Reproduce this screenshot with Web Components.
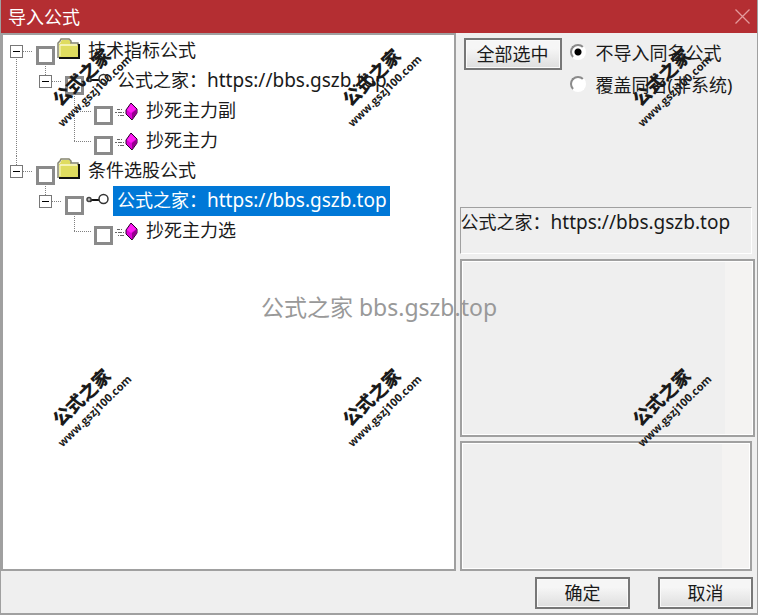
<!DOCTYPE html>
<html lang="zh-CN">
<head>
<meta charset="utf-8">
<title>导入公式</title>
<style>
  html, body {
    margin: 0;
    height: 100%;
  }

  body {
    font: 18px/30px "Noto Sans", "Noto Sans CJK SC", sans-serif;
    color: #1a1a1a;
    background: #efefef;
  }

  .url {
    font-size: 19px;
  }
</style>
</head>
<body>
<import-dialog>
  <formula-tree slot="tree">
    <tree-item icon="folder" open first>技术指标公式
      <tree-item slot="children" icon="key" open last>公式之家：<span class="url">https://bbs.gszb.top</span>
        <tree-item slot="children" icon="formula">抄死主力副</tree-item>
        <tree-item slot="children" icon="formula" last>抄死主力</tree-item>
      </tree-item>
    </tree-item>
    <tree-item icon="folder" open last>条件选股公式
      <tree-item slot="children" icon="key" open last selected>公式之家：<span class="url">https://bbs.gszb.top</span>
        <tree-item slot="children" icon="formula" last>抄死主力选</tree-item>
      </tree-item>
    </tree-item>
  </formula-tree>
  <import-options slot="options"></import-options>
  <info-box slot="details">公式之家：<span class="url">https://bbs.gszb.top</span></info-box>
  <text-pane slot="details" class="wide" label="公式说明"></text-pane>
  <text-pane slot="details" class="short" label="公式内容"></text-pane>
  <push-button slot="actions">确定</push-button>
  <push-button slot="actions">取消</push-button>
</import-dialog>

<script>
const define = (tag, html, setup) => {
  const template = document.createElement("template");
  template.innerHTML = html;

  customElements.define(tag, class extends HTMLElement {
    constructor() {
      super();
      this.dom = this.attachShadow({ mode: "open" });
      this.dom.appendChild(template.content.cloneNode(true));
    }

    connectedCallback() {
      if (setup && !this.ready) setup(this, this.dom);
      this.ready = true;
    }
  });
};

const icons = {
  folder: `
    <svg width="24" height="30" viewBox="0 0 24 30">
      <path d="M2 22V8l2-2V5l1-1h7l2 2v2h7v14z" fill="#dfdc5f"/>
      <path d="M1 22V7l2-2 1-2h8l2 2v2h7v2" fill="none" stroke="#85856f" stroke-width="1.5"/>
      <path d="M3 9h17" stroke="#fbfad0" stroke-width="1.5"/>
      <path d="M3 9v11" stroke="#fbfad0"/>
      <path d="M2 22h20V8" fill="none" stroke="#111" stroke-width="2"/>
    </svg>`,
  key: `
    <svg width="24" height="30" viewBox="0 0 24 30">
      <path d="M5 14h9" stroke="#111" stroke-width="2"/>
      <circle cx="3" cy="13.5" r="2" fill="#bbb" stroke="#444" stroke-width="1.5"/>
      <path d="M4 16l3-2" stroke="#222"/>
      <circle cx="17.5" cy="13" r="4.5" fill="#fff" stroke="#333" stroke-width="1.5"/>
    </svg>`,
  formula: `
    <svg width="24" height="30" viewBox="0 0 24 30">
      <g stroke="#666" stroke-width="1">
        <path d="M2 13.5h6" stroke-dasharray="3 1 1 1"/>
        <path d="M0 16.5h9" stroke-dasharray="2 1 4 1"/>
        <path d="M3 19.5h7" stroke-dasharray="1 1 4 1"/>
      </g>
      <path d="M16 7l6 6v4l-5 7-6-6v-4z" fill="#e000d8" stroke="#2b002b"/>
      <path d="M16 8l-4 6 4 3 5-4z" fill="#ff20f4"/>
      <path d="M17 23v-6l5-4v4z" fill="#96008f"/>
    </svg>`
};

define("push-button", `
  <style>
    :host {
      display: inline-block;
      min-width: 95px;
    }

    button {
      display: block;
      box-sizing: border-box;
      width: 100%;
      height: 32px;
      padding: 0 8px;
      font: inherit;
      line-height: 26px;
      color: inherit;
      border: 2px solid #777;
      border-radius: 0;
      background: linear-gradient(#f6f6f6 30%, #dedede);
      box-shadow: inset 0 0 0 1px #fafafa;
    }
  </style>
  <button type="button"><slot></slot></button>
`);

define("tree-item", `
  <style>
    /* trunk of the tree: full height, or to the middle of the row for the last item */
    :host {
      display: block;
      color: #1a1a1a;
      background: repeating-linear-gradient(#808080 0 1px, transparent 1px 2px) 6px 0 / 1px 100% no-repeat;
    }

    :host([first]) {
      background-position: 6px 15px;
    }

    :host([last]) {
      background-size: 1px 15px;
    }

    .row, label {
      display: flex;
      height: 30px;
    }

    .lead {
      display: flex;
      align-items: center;
      width: 25px;
    }

    .lead::after {
      content: "";
      flex: 1;
      height: 1px;
      margin-right: 2px;
      background: repeating-linear-gradient(90deg, #808080 0 1px, transparent 1px 2px);
    }

    :host(:not([open])) .lead {
      padding-left: 6px;
      box-sizing: border-box;
    }

    .toggle {
      display: grid;
      place-items: center;
      box-sizing: border-box;
      width: 13px;
      height: 13px;
      padding: 0;
      border: 1px solid #777;
      border-radius: 0;
      background: #fff;
    }

    .toggle::before {
      content: "";
      width: 7px;
      height: 1px;
      background: #000;
    }

    :host(:not([open])) .toggle {
      display: none;
    }

    input {
      appearance: none;
      align-self: flex-end;
      box-sizing: border-box;
      width: 19px;
      height: 19px;
      margin: 0 2px 1px 1px;
      border: 3px solid #8a8a8a;
      background: #fff;
    }

    .text {
      margin-left: 3px;
      padding: 0 3px 0 4px;
      line-height: 28px;
      white-space: nowrap;
    }

    :host([selected]) .text {
      color: #fff;
      background: #0078d7;
    }

    .children {
      padding-left: 29px;
    }
  </style>
  <div class="row">
    <span class="lead"><button class="toggle" type="button" aria-label="折叠"></button></span>
    <label><input type="checkbox"><span class="icon"></span><span class="text"><slot></slot></span></label>
  </div>
  <div class="children"><slot name="children"></slot></div>
`, (host, dom) => {
  dom.querySelector(".icon").innerHTML = icons[host.getAttribute("icon")];
});

define("formula-tree", `
  <style>
    :host {
      display: block;
      box-sizing: border-box;
      padding: 1px 7px;
      border: 2px solid #a0a0a0;
      background: #fff;
    }
  </style>
  <slot></slot>
`);

define("import-options", `
  <style>
    :host {
      display: flex;
      align-items: flex-start;
      gap: 8px;
      min-height: 169px;
      padding: 5px 0 0 4px;
      box-sizing: border-box;
    }

    push-button {
      min-width: 98px;
    }

    fieldset {
      display: grid;
      gap: 2px;
      margin: 0;
      padding: 0;
      border: 0;
    }

    label {
      display: flex;
      gap: 10px;
      white-space: nowrap;
    }

    input {
      appearance: none;
      box-sizing: border-box;
      width: 16px;
      height: 16px;
      margin: 6px 0 0;
      border: 2px solid;
      border-color: #8a8a8a #fff #fff #8a8a8a;
      border-radius: 50%;
      background: #fff;
    }

    input:checked {
      background: radial-gradient(#000 0 3px, #fff 4px);
    }
  </style>
  <push-button>全部选中</push-button>
  <fieldset aria-label="同名公式">
    <label><input type="radio" name="mode" checked>不导入同名公式</label>
    <label><input type="radio" name="mode">覆盖同名(非系统)</label>
  </fieldset>
`);

define("info-box", `
  <style>
    :host {
      display: block;
      height: 45px;
      margin-right: 3px;
      border: 1px solid;
      border-color: #a0a0a0 #fff #fff #a0a0a0;
      line-height: 28px;
      white-space: nowrap;
    }
  </style>
  <slot></slot>
`);

define("text-pane", `
  <style>
    :host {
      display: flex;
    }

    /* the lighter strip is the track of the disabled scroll bar */
    textarea {
      flex: 1;
      min-width: 0;
      box-sizing: border-box;
      margin: 0;
      padding: 4px 32px 4px 4px;
      font: inherit;
      resize: none;
      border: 2px solid #a0a0a0;
      border-radius: 0;
      box-shadow: inset 0 0 0 1px #fff;
      background: linear-gradient(#f4f3f2, #f4f3f2) right / 28px 100% no-repeat #efefef;
    }
  </style>
  <textarea readonly></textarea>
`, (host, dom) => {
  dom.querySelector("textarea").setAttribute("aria-label", host.getAttribute("label"));
});

define("water-marks", `
  <style>
    :host {
      position: absolute;
      inset: 0;
      overflow: hidden;
      pointer-events: none;
    }

    .stamps {
      display: grid;
      grid-template-columns: repeat(3, 80px);
      grid-auto-rows: 80px;
      gap: 240px 210px;
      padding: 43px 46px;
    }

    .stamp {
      display: grid;
      place-content: center;
      justify-items: center;
      transform: rotate(-44deg);
      font: 700 11px/16px "Open Sans", "Noto Sans CJK SC", sans-serif;
    }

    .stamp b {
      font-size: 18px;
      line-height: 22px;
      font-weight: 900;
    }

    .center {
      position: absolute;
      inset: 0;
      display: grid;
      place-items: center;
      font-size: 23px;
      color: #999;
    }
  </style>
  <div class="stamps"></div>
  <div class="center">公式之家 bbs.gszb.top</div>
`, (host, dom) => {
  dom.querySelector(".stamps").innerHTML =
    `<div class="stamp"><b>公式之家</b><span>www.gszj100.com</span></div>`.repeat(6);
});

define("import-dialog", `
  <style>
    :host {
      position: relative;
      display: flex;
      flex-direction: column;
      box-sizing: border-box;
      min-height: 100%;
      border: solid #a0a0a0;
      border-width: 0 1px 2px;
      overflow: hidden;
    }

    header {
      display: flex;
      justify-content: space-between;
      align-items: center;
      height: 33px;
      margin: 0 -1px;
      padding: 0 8px;
      color: #fff;
      background: #b42e32;
    }

    h1 {
      margin: 0;
      font: inherit;
      line-height: 28px;
    }

    .close {
      display: flex;
      padding: 0;
      border: 0;
      background: none;
    }

    main {
      flex: 1;
      display: grid;
      grid-template-columns: 20fr 13fr;
      gap: 4px;
      padding: 0 2px 0 0;
    }

    .side {
      display: flex;
      flex-direction: column;
      min-width: 0;
    }

    ::slotted(info-box) {
      margin-top: 5px;
    }

    ::slotted(.wide) {
      flex: 11;
      margin-top: 5px;
    }

    ::slotted(.short) {
      flex: 8;
      margin: 4px 3px 0 0;
    }

    footer {
      display: flex;
      justify-content: flex-end;
      gap: 28px;
      padding: 6px 4px 4px;
    }
  </style>
  <header>
    <h1>导入公式</h1>
    <button class="close" type="button" aria-label="关闭">
      <svg width="15" height="15" viewBox="0 0 15 15" stroke="#e39a9c" stroke-width="1.3"><path d="M.5.5l14 14M14.5.5l-14 14"/></svg>
    </button>
  </header>
  <main>
    <slot name="tree"></slot>
    <div class="side">
      <slot name="options"></slot>
      <slot name="details"></slot>
    </div>
  </main>
  <footer><slot name="actions"></slot></footer>
  <water-marks></water-marks>
`);
</script>
</body>
</html>
